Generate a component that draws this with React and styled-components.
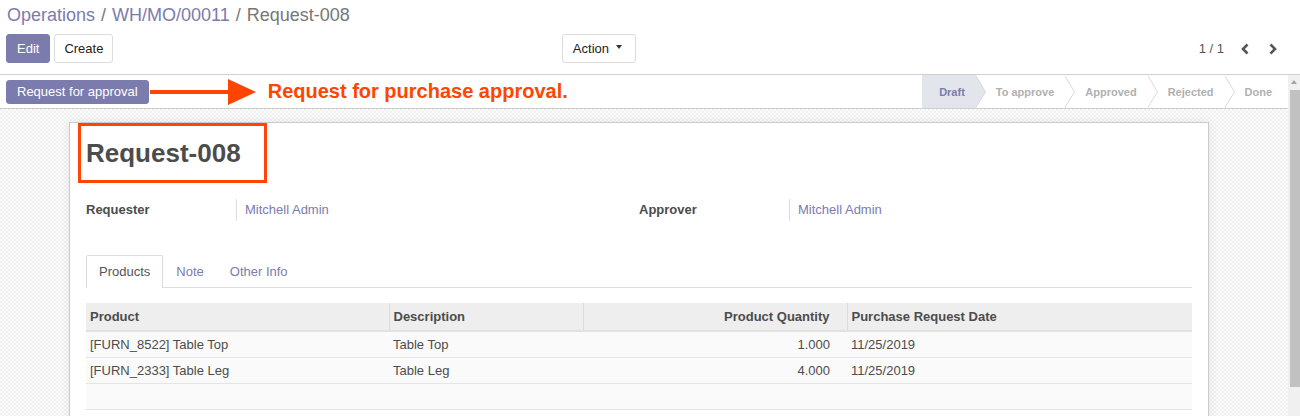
import React from 'react';
import styled, { createGlobalStyle } from 'styled-components';

const PRIMARY = '#7c7bad';
const TEXT = '#4c4c4c';
const RED = '#ff4500';

const Global = createGlobalStyle`
  html, body { margin: 0; padding: 0; }
  body {
    font-family: "Liberation Sans", Arial, sans-serif;
    font-size: 13px;
    color: ${TEXT};
    background: #fff;
  }
  * { box-sizing: border-box; }
`;

const Page = styled.div`
  height: 416px;
  display: flex;
  flex-direction: column;
  overflow: hidden;
`;

const ControlPanel = styled.div`
  flex: none;
  padding: 4px 0 11px;
  border-bottom: 1px solid #cfcfcf;
  background: #fff;
`;

const Breadcrumb = styled.div`
  display: flex;
  align-items: center;
  gap: 6px;
  padding-left: 7px;
  font-size: 18px;
  line-height: 22px;
  height: 22px;
`;

const Crumb = styled.span`
  color: ${(p) => (p.$active ? '#777' : PRIMARY)};
`;

const Slash = styled.span`
  color: #777;
`;

const CpRow = styled.div`
  display: grid;
  grid-template-columns: 50% 50%;
  margin-top: 8px;
  height: 29px;
`;

const CpLeft = styled.div`
  display: flex;
  align-items: center;
  justify-content: space-between;
  padding: 0 14px 0 6px;
`;

const CpRight = styled.div`
  display: flex;
  align-items: center;
  justify-content: flex-end;
  padding-right: 13px;
`;

const ButtonGroup = styled.div`
  display: flex;
  gap: 4px;
`;

const Button = styled.button`
  font-family: inherit;
  font-size: 13px;
  height: ${(p) => (p.$small ? '24px' : '29px')};
  padding: 0 ${(p) => (p.$pad || 10)}px;
  border-radius: 3px;
  border: 1px solid ${(p) => (p.$primary ? PRIMARY : '#dcdcdc')};
  background: ${(p) => (p.$primary ? PRIMARY : '#fff')};
  color: ${(p) => (p.$primary ? '#fff' : '#222')};
  display: inline-flex;
  align-items: center;
  gap: 7px;
  cursor: pointer;
`;

const Caret = styled.span`
  width: 0;
  height: 0;
  border-left: 3.5px solid transparent;
  border-right: 3.5px solid transparent;
  border-top: 4px solid #333;
  margin: -3px 3px 0 0;
`;

const Pager = styled.div`
  display: flex;
  align-items: center;
`;

const PagerValue = styled.span`
  color: #555;
  font-size: 13px;
  margin-right: 7px;
`;

const PagerBtn = styled.span`
  width: 28px;
  height: 29px;
  display: flex;
  align-items: center;
  justify-content: center;
  color: #555;
`;

const Main = styled.div`
  flex: 1;
  display: flex;
  min-height: 0;
`;

const Content = styled.div`
  flex: 1;
  min-width: 0;
  overflow: hidden;
  background-color: #f7f7f7;
  background-image: repeating-conic-gradient(#f0f0f0 0 25%, #fcfcfc 0 50%);
  background-size: 4px 4px;
`;

const ScrollTrack = styled.div`
  flex: none;
  width: 12px;
  background: #f0f0f0;
  display: flex;
  flex-direction: column;
`;

const ScrollUp = styled.div`
  height: 13px;
  display: flex;
  align-items: center;
  justify-content: center;

  &::before {
    content: '';
    width: 0;
    height: 0;
    border-left: 3.5px solid transparent;
    border-right: 3.5px solid transparent;
    border-bottom: 4px solid #a3a3a3;
  }
`;

const ScrollThumb = styled.div`
  margin: 2px 0 0 2px;
  height: 297px;
  background: #c1c1c1;
`;

const StatusBar = styled.div`
  display: flex;
  align-items: center;
  height: 34px;
  background: #fff;
  border-bottom: 1px solid #cfcfcf;
  padding-left: 6px;
`;

const ArrowNote = styled.svg`
  margin-left: 1px;
  flex: none;
`;

const Note = styled.span`
  color: ${RED};
  font-weight: 700;
  font-size: 20px;
  margin-left: 10px;
`;

const Steps = styled.div`
  margin-left: auto;
  display: flex;
  height: 33px;
  align-self: flex-start;
`;

const Step = styled.div`
  position: relative;
  display: flex;
  align-items: center;
  padding: 0 ${(p) => (p.$last ? 16 : 11)}px 0 ${(p) => (p.$first ? 17 : 20)}px;
  font-size: 11px;
  font-weight: 700;
  color: ${(p) => (p.$active ? PRIMARY : '#b0b0b0')};
  background: ${(p) => (p.$active ? '#e2e5eb' : '#fff')};

  &::before, &::after {
    content: '';
    display: ${(p) => (p.$last ? 'none' : 'block')};
    position: absolute;
    top: 0;
    width: 0;
    height: 0;
    border-top: 17px solid transparent;
    border-bottom: 16px solid transparent;
  }
  &::before {
    right: -10px;
    border-left: 10px solid #d9d9d9;
    z-index: 1;
  }
  &::after {
    right: -9px;
    border-left: 10px solid ${(p) => (p.$active ? '#e2e5eb' : '#fff')};
    z-index: 2;
  }
`;

const Sheet = styled.div`
  position: relative;
  width: 1140px;
  min-height: 318px;
  margin: 13px 0 12px 69px;
  padding: 12px 16px 16px;
  background: #fff;
  border: 1px solid #c9c9d4;
  box-shadow: 0 0 10px rgba(0, 0, 0, 0.08);
`;

const Highlight = styled.div`
  position: absolute;
  left: 8px;
  top: 0;
  width: 189px;
  height: 60px;
  border: 3px solid ${RED};
`;

const Title = styled.h1`
  margin: 0;
  font-size: 26px;
  line-height: 36px;
  font-weight: 700;
  color: ${TEXT};
`;

const Fields = styled.div`
  display: grid;
  grid-template-columns: 1fr 1fr;
  margin-top: 28px;
`;

const FieldGroup = styled.div`
  display: grid;
  grid-template-columns: 150px 1fr;
  line-height: 22px;
`;

const Label = styled.div`
  font-weight: 700;
  color: ${TEXT};
`;

const Value = styled.div`
  border-left: 1px solid #ddd;
  padding-left: 8px;
  color: ${PRIMARY};
`;

const Tabs = styled.div`
  display: flex;
  align-items: flex-start;
  margin-top: 34px;
  border-bottom: 1px solid #ddd;
  height: 33px;
`;

const Tab = styled.div`
  padding: 0 12px;
  line-height: 31px;
  height: ${(p) => (p.$active ? 33 : 32)}px;
  border: 1px solid ${(p) => (p.$active ? '#ddd' : 'transparent')};
  border-bottom: none;
  background: ${(p) => (p.$active ? '#fff' : 'transparent')};
  color: ${(p) => (p.$active ? '#555' : PRIMARY)};
  border-radius: 2px 2px 0 0;
`;

const Table = styled.table`
  margin-top: 15px;
  width: 100%;
  border-collapse: collapse;
  table-layout: fixed;
`;

const Th = styled.th`
  height: 28px;
  padding: 0 ${(p) => (p.$num ? 17 : 4)}px 0 4px;
  text-align: ${(p) => (p.$num ? 'right' : 'left')};
  font-weight: 700;
  background: #eee;
  color: ${TEXT};
  border-left: ${(p) => (p.$first ? 'none' : '1px solid #dcdcdc')};
  border-bottom: 2px solid #e2e2e2;
  white-space: nowrap;
`;

const Td = styled.td`
  height: 26px;
  padding: 0 ${(p) => (p.$num ? 17 : 4)}px 0 4px;
  text-align: ${(p) => (p.$num ? 'right' : 'left')};
  background: #fafafa;
  border-bottom: 1px solid #e4e4e4;
  color: ${TEXT};
  white-space: nowrap;
`;

const ChevronLeft = () => (
  <svg width="10" height="12" viewBox="0 0 10 12">
    <path d="M7.5 1.5 L3 6 L7.5 10.5" fill="none" stroke="currentColor" strokeWidth="2.6" />
  </svg>
);

const ChevronRight = () => (
  <svg width="10" height="12" viewBox="0 0 10 12">
    <path d="M2.5 1.5 L7 6 L2.5 10.5" fill="none" stroke="currentColor" strokeWidth="2.6" />
  </svg>
);

const rows = [
  { product: '[FURN_8522] Table Top', desc: 'Table Top', qty: '1.000', date: '11/25/2019' },
  { product: '[FURN_2333] Table Leg', desc: 'Table Leg', qty: '4.000', date: '11/25/2019' },
];

const steps = ['Draft', 'To approve', 'Approved', 'Rejected', 'Done'];

export default function App() {
  return (
    <Page>
      <Global />
      <ControlPanel>
        <Breadcrumb>
          <Crumb>Operations</Crumb>
          <Slash>/</Slash>
          <Crumb>WH/MO/00011</Crumb>
          <Slash>/</Slash>
          <Crumb $active>Request-008</Crumb>
        </Breadcrumb>
        <CpRow>
          <CpLeft>
            <ButtonGroup>
              <Button $primary>Edit</Button>
              <Button $pad={9}>Create</Button>
            </ButtonGroup>
            <Button $pad={10}>
              Action <Caret />
            </Button>
          </CpLeft>
          <CpRight>
            <Pager>
              <PagerValue>1 / 1</PagerValue>
              <PagerBtn><ChevronLeft /></PagerBtn>
              <PagerBtn><ChevronRight /></PagerBtn>
            </Pager>
          </CpRight>
        </CpRow>
      </ControlPanel>
      <Main>
        <Content>
          <StatusBar>
            <Button $primary $small>Request for approval</Button>
            <ArrowNote width="108" height="28" viewBox="0 0 108 28">
              <rect x="0" y="12" width="80" height="4" fill={RED} />
              <polygon points="78,1 106,14 78,27" fill={RED} />
            </ArrowNote>
            <Note>Request for purchase approval.</Note>
            <Steps>
              {steps.map((s, i) => (
                <Step key={s} $active={i === 0} $first={i === 0} $last={i === steps.length - 1}>
                  {s}
                </Step>
              ))}
            </Steps>
          </StatusBar>
          <Sheet>
            <Highlight />
            <Title>Request-008</Title>
            <Fields>
              <FieldGroup>
                <Label>Requester</Label>
                <Value>Mitchell Admin</Value>
              </FieldGroup>
              <FieldGroup>
                <Label>Approver</Label>
                <Value>Mitchell Admin</Value>
              </FieldGroup>
            </Fields>
            <Tabs>
              <Tab $active>Products</Tab>
              <Tab>Note</Tab>
              <Tab>Other Info</Tab>
            </Tabs>
            <Table>
              <colgroup>
                <col style={{ width: 303 }} />
                <col style={{ width: 194 }} />
                <col style={{ width: 264 }} />
                <col style={{ width: 345 }} />
              </colgroup>
              <thead>
                <tr>
                  <Th $first>Product</Th>
                  <Th>Description</Th>
                  <Th $num>Product Quantity</Th>
                  <Th>Purchase Request Date</Th>
                </tr>
              </thead>
              <tbody>
                {rows.map((r) => (
                  <tr key={r.product}>
                    <Td>{r.product}</Td>
                    <Td>{r.desc}</Td>
                    <Td $num>{r.qty}</Td>
                    <Td>{r.date}</Td>
                  </tr>
                ))}
                <tr>
                  <Td />
                  <Td />
                  <Td />
                  <Td />
                </tr>
              </tbody>
            </Table>
          </Sheet>
        </Content>
        <ScrollTrack>
          <ScrollUp />
          <ScrollThumb />
        </ScrollTrack>
      </Main>
    </Page>
  );
}
